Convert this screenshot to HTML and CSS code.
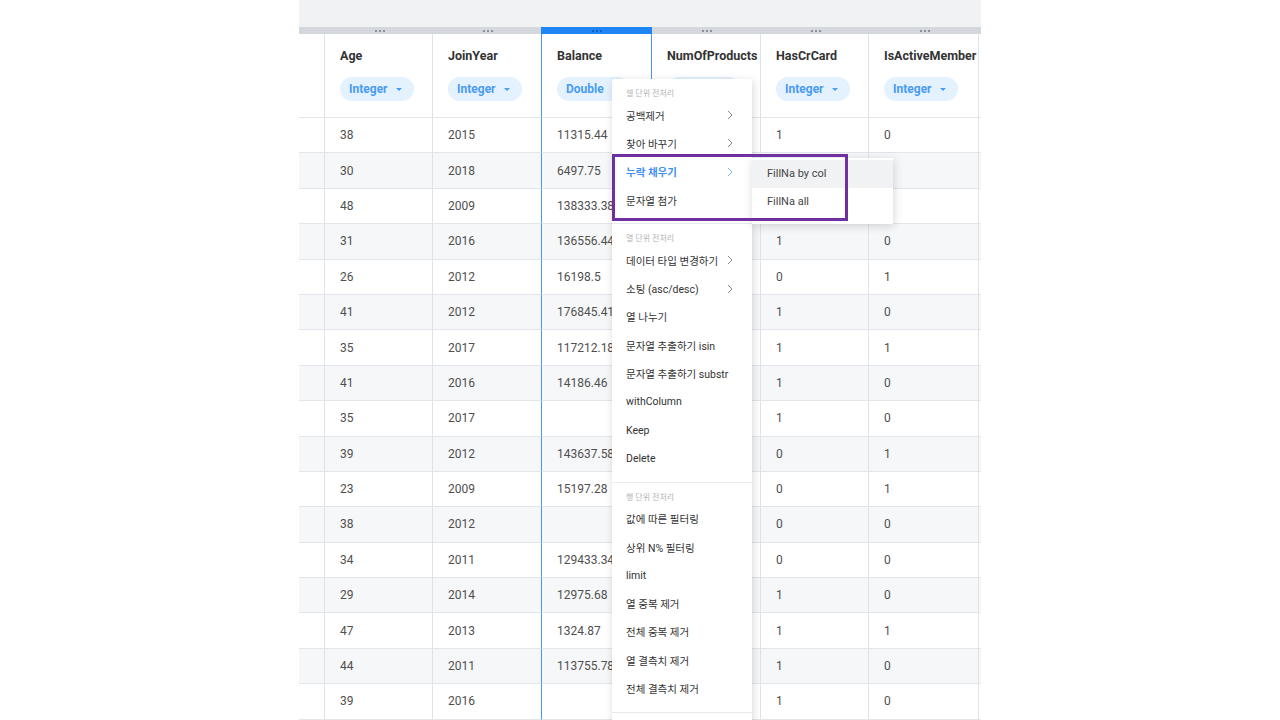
FILE: index.html
```html
<!DOCTYPE html>
<html lang="ko">
<head>
<meta charset="utf-8">
<title>Data grid</title>
<link rel="stylesheet" href="styles.css">
</head>
<body>
<div class="page">
  <div class="topbar"></div>
  <div class="grid">
    <div class="col c0">
      <div class="grip"></div>
      <div class="head"></div>
      <div class="cell"></div><div class="cell"></div><div class="cell"></div><div class="cell"></div><div class="cell"></div><div class="cell"></div><div class="cell"></div><div class="cell"></div><div class="cell"></div><div class="cell"></div><div class="cell"></div><div class="cell"></div><div class="cell"></div><div class="cell"></div><div class="cell"></div><div class="cell"></div><div class="cell"></div>
    </div>
    <div class="col c108">
      <div class="grip"><span class="dots"></span></div>
      <div class="head"><div class="title">Age</div><div class="pill">Integer<span class="caret"></span></div></div>
      <div class="cell">38</div><div class="cell">30</div><div class="cell">48</div><div class="cell">31</div><div class="cell">26</div><div class="cell">41</div><div class="cell">35</div><div class="cell">41</div><div class="cell">35</div><div class="cell">39</div><div class="cell">23</div><div class="cell">38</div><div class="cell">34</div><div class="cell">29</div><div class="cell">47</div><div class="cell">44</div><div class="cell">39</div>
    </div>
    <div class="col c108 presel">
      <div class="grip"><span class="dots"></span></div>
      <div class="head"><div class="title">JoinYear</div><div class="pill">Integer<span class="caret"></span></div></div>
      <div class="cell">2015</div><div class="cell">2018</div><div class="cell">2009</div><div class="cell">2016</div><div class="cell">2012</div><div class="cell">2012</div><div class="cell">2017</div><div class="cell">2016</div><div class="cell">2017</div><div class="cell">2012</div><div class="cell">2009</div><div class="cell">2012</div><div class="cell">2011</div><div class="cell">2014</div><div class="cell">2013</div><div class="cell">2011</div><div class="cell">2016</div>
    </div>
    <div class="col c111 sel">
      <div class="grip"><span class="dots"></span></div>
      <div class="head"><div class="title">Balance</div><div class="pill">Double<span class="caret"></span></div></div>
      <div class="cell">11315.44</div><div class="cell">6497.75</div><div class="cell">138333.38</div><div class="cell">136556.44</div><div class="cell">16198.5</div><div class="cell">176845.41</div><div class="cell">117212.18</div><div class="cell">14186.46</div><div class="cell"></div><div class="cell">143637.58</div><div class="cell">15197.28</div><div class="cell"></div><div class="cell">129433.34</div><div class="cell">12975.68</div><div class="cell">1324.87</div><div class="cell">113755.78</div><div class="cell"></div>
    </div>
    <div class="col c109">
      <div class="grip"><span class="dots"></span></div>
      <div class="head"><div class="title">NumOfProducts</div><div class="pill">Integer<span class="caret"></span></div></div>
      <div class="cell"></div><div class="cell"></div><div class="cell"></div><div class="cell"></div><div class="cell"></div><div class="cell"></div><div class="cell"></div><div class="cell"></div><div class="cell"></div><div class="cell"></div><div class="cell"></div><div class="cell"></div><div class="cell"></div><div class="cell"></div><div class="cell"></div><div class="cell"></div><div class="cell"></div>
    </div>
    <div class="col c108">
      <div class="grip"><span class="dots"></span></div>
      <div class="head"><div class="title">HasCrCard</div><div class="pill">Integer<span class="caret"></span></div></div>
      <div class="cell">1</div><div class="cell"></div><div class="cell"></div><div class="cell">1</div><div class="cell">0</div><div class="cell">1</div><div class="cell">1</div><div class="cell">1</div><div class="cell">1</div><div class="cell">0</div><div class="cell">0</div><div class="cell">0</div><div class="cell">0</div><div class="cell">1</div><div class="cell">1</div><div class="cell">1</div><div class="cell">1</div>
    </div>
    <div class="col c110">
      <div class="grip"><span class="dots"></span></div>
      <div class="head"><div class="title">IsActiveMember</div><div class="pill">Integer<span class="caret"></span></div></div>
      <div class="cell">0</div><div class="cell"></div><div class="cell"></div><div class="cell">0</div><div class="cell">1</div><div class="cell">0</div><div class="cell">1</div><div class="cell">0</div><div class="cell">0</div><div class="cell">1</div><div class="cell">1</div><div class="cell">0</div><div class="cell">0</div><div class="cell">0</div><div class="cell">1</div><div class="cell">0</div><div class="cell">0</div>
    </div>
    <div class="col c2">
      <div class="grip"></div>
      <div class="head"></div>
      <div class="cell"></div><div class="cell"></div><div class="cell"></div><div class="cell"></div><div class="cell"></div><div class="cell"></div><div class="cell"></div><div class="cell"></div><div class="cell"></div><div class="cell"></div><div class="cell"></div><div class="cell"></div><div class="cell"></div><div class="cell"></div><div class="cell"></div><div class="cell"></div><div class="cell"></div>
    </div>
  </div>

  <div class="menu">
    <div class="group">
      <div class="label">셀 단위 전처리</div>
      <div class="item"><span>공백제거</span><svg class="chev" width="6" height="10" viewBox="0 0 6 10"><polyline points="1,1 5,5 1,9" fill="none" stroke="currentColor" stroke-width="1"/></svg></div>
      <div class="item"><span>찾아 바꾸기</span><svg class="chev" width="6" height="10" viewBox="0 0 6 10"><polyline points="1,1 5,5 1,9" fill="none" stroke="currentColor" stroke-width="1"/></svg></div>
      <div class="item active"><span>누락 채우기</span><svg class="chev" width="6" height="10" viewBox="0 0 6 10"><polyline points="1,1 5,5 1,9" fill="none" stroke="currentColor" stroke-width="1"/></svg>
        <div class="submenu">
          <div class="subitem hover">FillNa by col</div>
          <div class="subitem">FillNa all</div>
        </div>
      </div>
      <div class="item"><span>문자열 첨가</span></div>
    </div>
    <div class="group">
      <div class="label">열 단위 전처리</div>
      <div class="item"><span>데이터 타입 변경하기</span><svg class="chev" width="6" height="10" viewBox="0 0 6 10"><polyline points="1,1 5,5 1,9" fill="none" stroke="currentColor" stroke-width="1"/></svg></div>
      <div class="item"><span>소팅 (asc/desc)</span><svg class="chev" width="6" height="10" viewBox="0 0 6 10"><polyline points="1,1 5,5 1,9" fill="none" stroke="currentColor" stroke-width="1"/></svg></div>
      <div class="item"><span>열 나누기</span></div>
      <div class="item"><span>문자열 추출하기 isin</span></div>
      <div class="item"><span>문자열 추출하기 substr</span></div>
      <div class="item"><span>withColumn</span></div>
      <div class="item"><span>Keep</span></div>
      <div class="item"><span>Delete</span></div>
    </div>
    <div class="group">
      <div class="label">행 단위 전처리</div>
      <div class="item"><span>값에 따른 필터링</span></div>
      <div class="item"><span>상위 N% 필터링</span></div>
      <div class="item"><span>limit</span></div>
      <div class="item"><span>열 중복 제거</span></div>
      <div class="item"><span>전체 중복 제거</span></div>
      <div class="item"><span>열 결측치 제거</span></div>
      <div class="item"><span>전체 결측치 제거</span></div>
    </div>
    <div class="group tail"></div>
  </div>

  <div class="highlight"></div>
</div>
</body>
</html>
```

FILE: styles.css
```css
html, body {
  margin: 0;
  padding: 0;
  background: #ffffff;
}

body {
  font-family: Roboto, "Noto Sans CJK KR", sans-serif;
}

.page {
  position: relative;
  width: 682px;
  height: 720px;
  margin: 0 auto;
  overflow: hidden;
  background: #ffffff;
}

.topbar {
  height: 27px;
  background: #f1f2f4;
}

.grid {
  display: flex;
  align-items: flex-start;
}

.col {
  flex: none;
  box-sizing: border-box;
}

.c0 { width: 26px; }
.c108 { width: 108px; }
.c109 { width: 109px; }
.c110 { width: 110px; }
.c111 { width: 111px; }
.c2 { width: 2px; }

.grip {
  height: 7px;
  background: #d4d8dd;
  display: flex;
  align-items: center;
  justify-content: center;
}

.dots {
  width: 11px;
  height: 2px;
  background: radial-gradient(circle, #8b9098 0.7px, transparent 1.1px) 0 0 / 4px 2px repeat-x;
}

.head {
  box-sizing: border-box;
  height: 84px;
  padding: 14px 0 0 15px;
  border-right: 1px solid #dfe2e7;
  border-bottom: 1px solid #e2e5e9;
  background: #ffffff;
}

.title {
  font-size: 12.5px;
  line-height: 16px;
  font-weight: 700;
  color: #333333;
  white-space: nowrap;
}

.pill {
  display: inline-flex;
  align-items: center;
  gap: 8px;
  height: 24px;
  margin-top: 13px;
  padding: 0 12px 0 9px;
  border-radius: 12px;
  background: #e4f2ff;
  color: #4a9bf3;
  font-size: 12px;
  font-weight: 700;
}

.caret {
  width: 0;
  height: 0;
  border-left: 3px solid transparent;
  border-right: 3px solid transparent;
  border-top: 3px solid #4a9bf3;
}

.cell {
  box-sizing: border-box;
  height: 35.4px;
  padding-left: 15px;
  display: flex;
  align-items: center;
  border-right: 1px solid #dfe2e7;
  border-bottom: 1px solid #e2e5e9;
  font-size: 12px;
  color: #4f4f4f;
  white-space: nowrap;
  background: #ffffff;
}

.cell:nth-child(even) {
  background: #f6f7f9;
}

.c0 .head, .c0 .cell { padding-left: 0; }
.c2 .head, .c2 .cell { padding-left: 0; border-right: none; }

.presel .head, .presel .cell {
  border-right: none;
}

.sel .grip {
  background: #1d86f4;
}

.sel .dots {
  background: radial-gradient(circle, #0f5fc0 0.7px, transparent 1.1px) 0 0 / 4px 2px repeat-x;
}

.sel .head, .sel .cell {
  border-left: 1px solid #4696f2;
  border-right: 1px solid #4696f2;
}

/* context menu */
.menu {
  position: absolute;
  left: 313px;
  top: 79px;
  width: 140px;
  background: #ffffff;
  border-radius: 2px;
  box-shadow: 1px 2px 9px rgba(0, 0, 0, 0.16);
  font-size: 10.5px;
  color: #333333;
  z-index: 1;
}

.group {
  padding: 8px 0 9px;
  border-bottom: 1px solid #e9eaec;
}

.group.tail {
  height: 30px;
  padding: 0;
  border-bottom: none;
}

.label {
  height: 14px;
  line-height: 14px;
  padding-left: 14px;
  font-size: 8px;
  color: #b3b3b3;
}

.item {
  position: relative;
  box-sizing: border-box;
  height: 28.3px;
  padding: 0 19px 0 14px;
  display: flex;
  align-items: center;
  justify-content: space-between;
  white-space: nowrap;
}

.chev {
  color: #8c8c8c;
  flex: none;
}

.item.active {
  color: #3d8ff2;
  font-weight: 700;
}

.item.active .chev {
  color: #7fb2f0;
}

.submenu {
  position: absolute;
  left: 100%;
  top: 0;
  width: 141px;
  padding: 2px 0 8px;
  background: #ffffff;
  box-shadow: 1px 2px 9px rgba(0, 0, 0, 0.16);
  font-weight: 400;
  color: #444444;
  z-index: 2;
}

.subitem {
  height: 28.3px;
  line-height: 28.3px;
  padding-left: 15px;
  font-size: 11px;
}

.subitem.hover {
  background: #f1f2f4;
}

.highlight {
  position: absolute;
  left: 313px;
  top: 154px;
  width: 236px;
  height: 67px;
  box-sizing: border-box;
  border: 3px solid #7030a0;
  z-index: 3;
}
```
